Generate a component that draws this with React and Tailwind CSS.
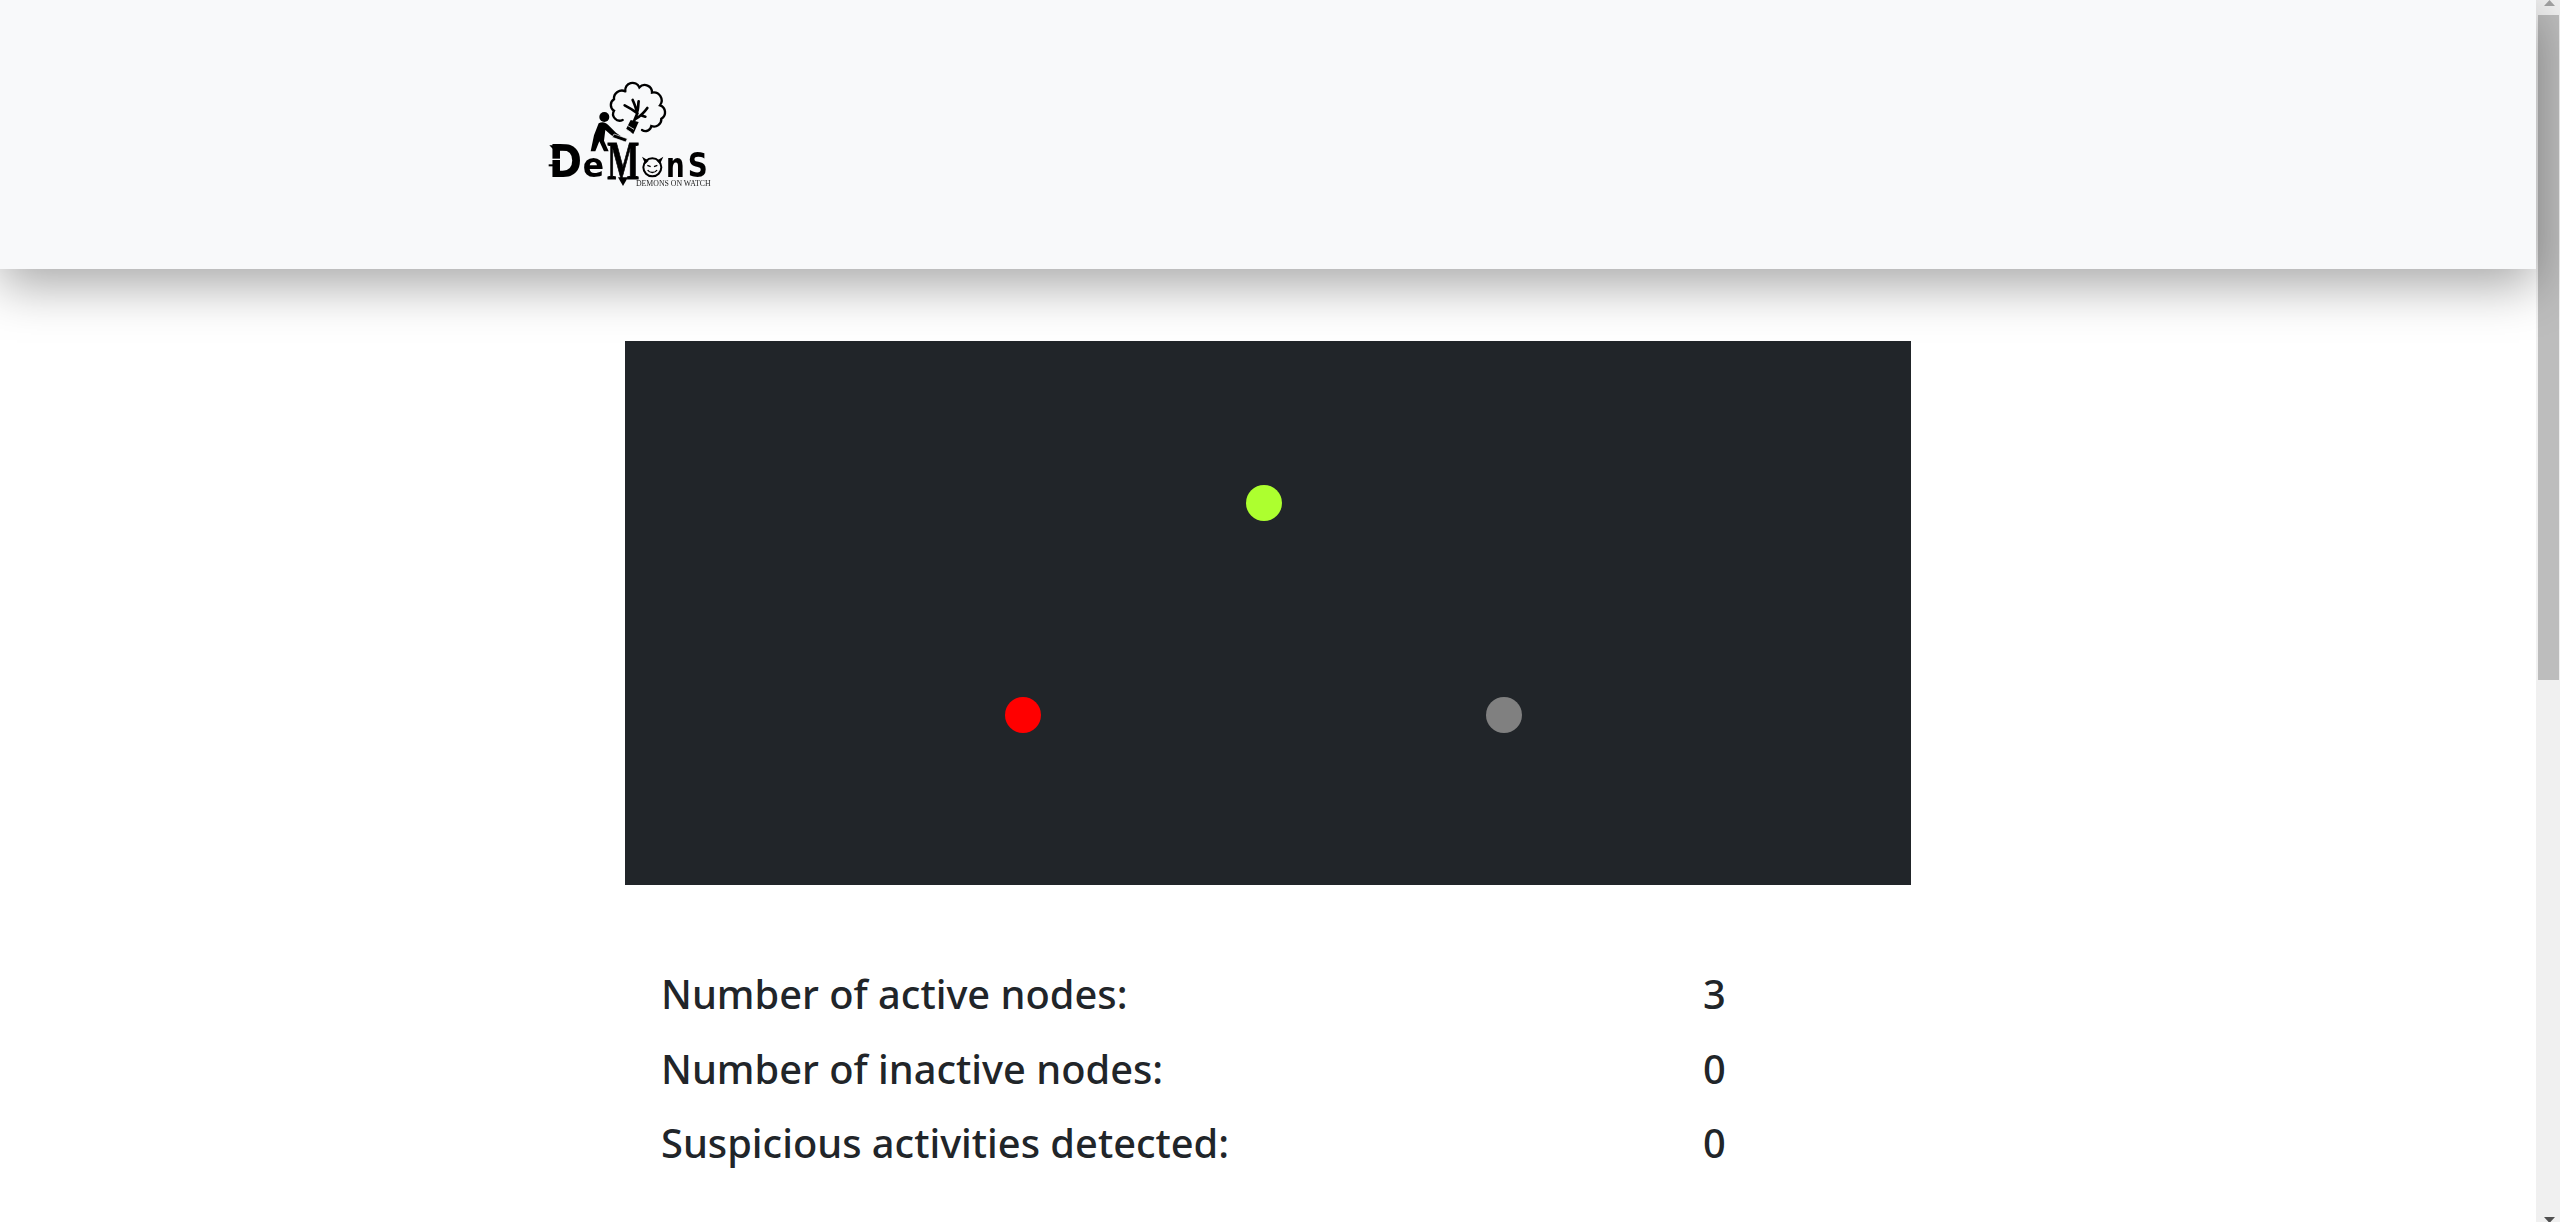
import React from "react";

const stats = [
  { label: "Number of active nodes:", value: 3 },
  { label: "Number of inactive nodes:", value: 0 },
  { label: "Suspicious activities detected:", value: 0 },
];

// Logo drawn on a 660x390 grid, shown at 220x130
function Logo() {
  return (
    <svg viewBox="0 0 660 390" className="w-[220px] h-[130px] blur-[0.4px]">
      {/* tree crown */}
      <path
        d="M316 64A22 22 0 0 1 358 52A22 22 0 0 1 396 68A24 24 0 0 1 420 106A22 22 0 0 1 424 146A22 22 0 0 1 394 168A18 18 0 0 1 366 180M308 150A20 20 0 0 1 282 122A20 20 0 0 1 282 88A24 24 0 0 1 316 64"
        fill="none"
        stroke="#000"
        strokeWidth="7"
        strokeLinecap="round"
      />
      {/* branches */}
      <path
        d="M340 158L352 130C340 120 326 112 314 106M350 130C350 116 344 104 338 90M350 128C356 118 354 104 356 94M348 146C362 138 372 128 382 114M362 136L376 140"
        fill="none"
        stroke="#000"
        strokeWidth="8"
        strokeLinecap="round"
      />
      <path d="M332 150l24 6-16 36-22-14z" fill="#000" />
      <path d="M322 166l20 12M316 176l18 12" stroke="#f8f9fa" strokeWidth="2.5" />
      {/* person */}
      <circle cx="253" cy="141" r="15" fill="#000" />
      <path
        d="M236 160c10-6 20-4 28 4l24 24 14 10-6 8-22-10-18-16-4 32 14 32h-14l-14-30-12 30h-14l10-48z"
        fill="#000"
      />
      {/* saw and stump */}
      <path d="M282 192l40 14-5 10-40-14z" fill="#000" stroke="#f8f9fa" strokeWidth="2" />
      {/* wordmark */}
      <text x="86" y="320" fontFamily="'DejaVu Sans', sans-serif" fontWeight="700" fontSize="134" textLength="100" lengthAdjust="spacingAndGlyphs" fill="#000">D</text>
      <path d="M88 226h40l16 16H104z" fill="#000" />
      <path d="M86 286h30" stroke="#000" strokeWidth="6" />
      <path d="M94 268h36" stroke="#f8f9fa" strokeWidth="4" />
      <text x="188" y="320" fontFamily="'DejaVu Sans', sans-serif" fontWeight="700" fontSize="100" textLength="64" lengthAdjust="spacingAndGlyphs" fill="#000">e</text>
      <text x="262" y="328" fontFamily="'Liberation Serif', serif" fontWeight="700" fontSize="164" textLength="96" lengthAdjust="spacingAndGlyphs" fill="#000" stroke="#000" strokeWidth="3">M</text>
      <path d="M294 322h30l-15 26z" fill="#000" />
      {/* devil face in place of the o */}
      <circle cx="397" cy="292" r="27" fill="none" stroke="#000" strokeWidth="6" />
      <path d="M366 260l10 22 10-10zM430 260l-10 22-10-10z" fill="#000" />
      <path d="M382 286l10 4M412 286l-10 4" stroke="#000" strokeWidth="4" />
      <path d="M383 300c6 10 22 10 28 0" fill="none" stroke="#000" strokeWidth="4" />
      <text x="438" y="320" fontFamily="'DejaVu Sans', sans-serif" fontWeight="700" fontSize="100" textLength="56" lengthAdjust="spacingAndGlyphs" fill="#000">n</text>
      <text x="503" y="320" fontFamily="'DejaVu Sans', sans-serif" fontWeight="700" fontSize="100" textLength="60" lengthAdjust="spacingAndGlyphs" fill="#000">S</text>
      <text x="348" y="348" fontFamily="'Liberation Serif', serif" fontSize="22" textLength="224" lengthAdjust="spacingAndGlyphs" fill="#222">DEMONS ON WATCH</text>
    </svg>
  );
}

// Stand-in for the browser's scrollbar shown in the screenshot
function ScrollRail() {
  return (
    <aside className="relative w-6 h-full shrink-0 bg-[#f0f0f0] flex flex-col justify-between items-center pl-[2px]">
      <svg viewBox="0 0 11 6" className="w-[11px] h-[6px]">
        <path d="M5.5 0L11 6H0z" fill="#a3a3a3" />
      </svg>
      <div className="absolute top-[15px] left-[2px] w-[21px] h-[665px] bg-[#bdbdbd]" />
      <svg viewBox="0 0 11 6" className="w-[11px] h-[6px] mb-[-1px]">
        <path d="M0 0h11L5.5 6z" fill="#505050" />
      </svg>
    </aside>
  );
}

export default function App() {
  return (
    <div className="flex h-[1222px] overflow-hidden bg-white text-[#212529] font-['Noto_Sans',sans-serif]">
      <div className="flex-1 min-w-0">
        <header className="relative z-10 h-[269px] pl-[520px] flex items-center bg-[#f8f9fa] shadow-[0_16px_48px_rgba(0,0,0,0.35)]">
          <Logo />
        </header>

        <main className="w-[1286px] mx-auto">
          {/* network canvas */}
          <div className="relative mt-[72px] h-[544px] bg-[#212529]">
            <span className="absolute left-[621px] top-[144px] w-9 h-9 rounded-full bg-[#adff2f]" />
            <span className="absolute left-[380px] top-[356px] w-9 h-9 rounded-full bg-[#ff0000]" />
            <span className="absolute left-[861px] top-[356px] w-9 h-9 rounded-full bg-[#808080]" />
          </div>

          <div className="mt-[72px] pl-[36px]">
            {stats.map((s) => (
              <div key={s.label} className="grid grid-cols-[1042px_auto] h-[74.5px] items-center text-[39.8px] font-medium leading-none">
                <div>{s.label}</div>
                <div>{s.value}</div>
              </div>
            ))}
          </div>
        </main>
      </div>
      <ScrollRail />
    </div>
  );
}
